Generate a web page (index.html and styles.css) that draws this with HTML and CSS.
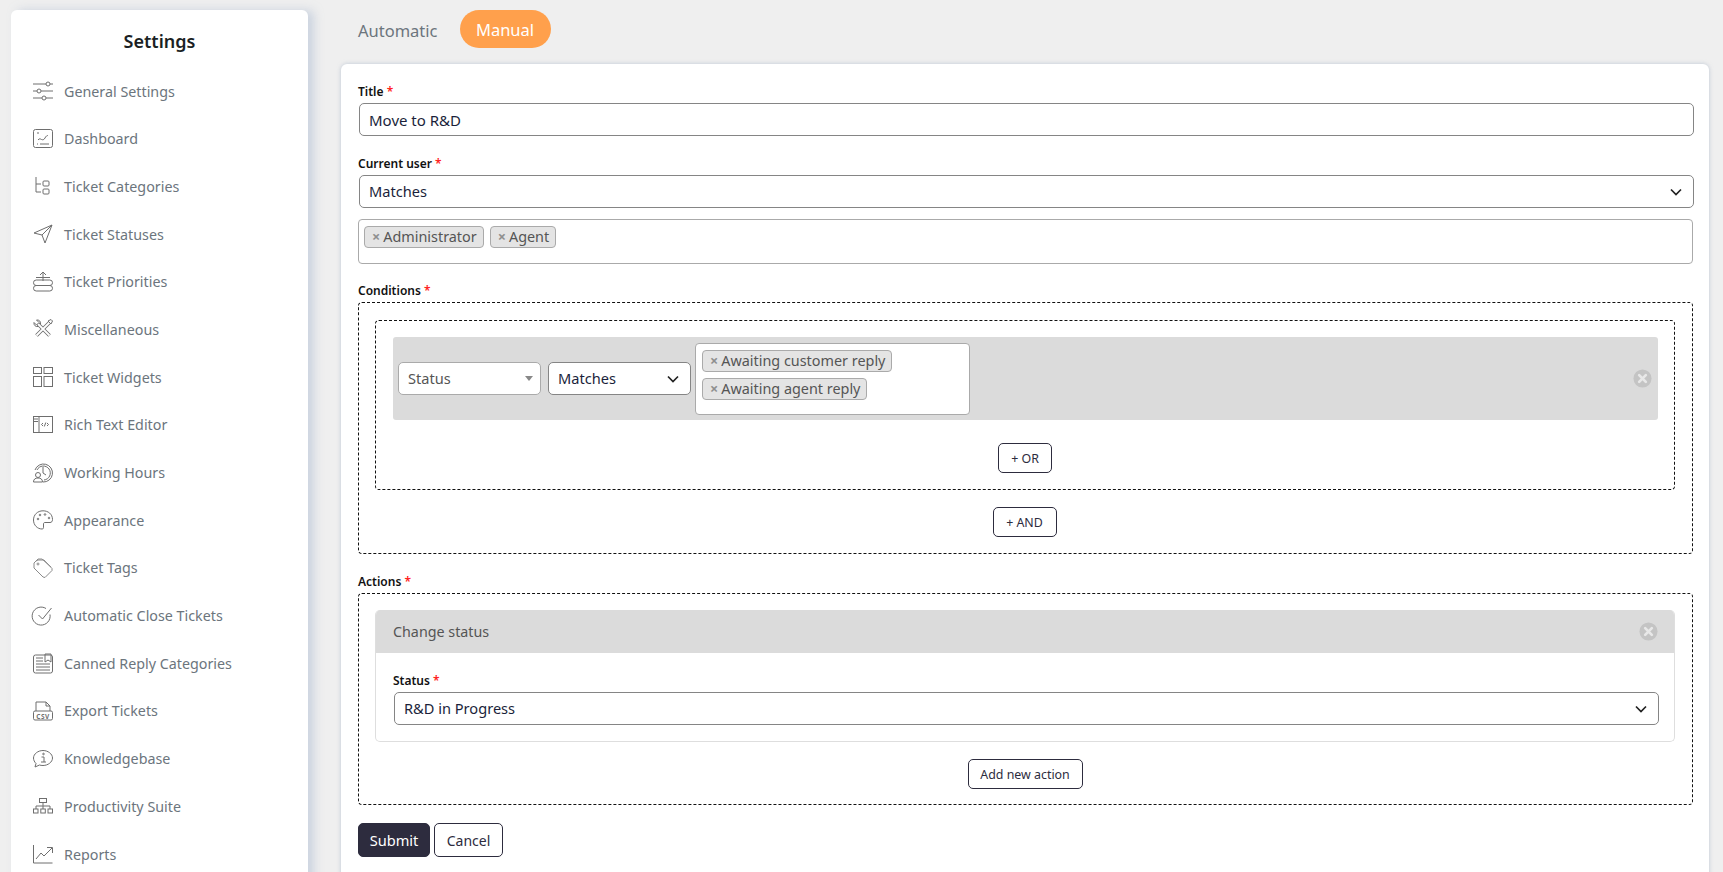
FILE: index.html
```html
<!DOCTYPE html>
<html lang="en">
<head>
<meta charset="utf-8">
<title>Settings</title>
<link rel="stylesheet" href="styles.css">
</head>
<body>
<div class="page">
  <aside class="sidebar">
    <h2 class="sidebar-title">Settings</h2>
    <nav class="nav">
      <a class="nav-item"><svg class="ico" viewBox="0 0 20 20"><path d="M0 3h13M17 3h3M0 10h4M8 10h12M0 17h9M13 17h7"/><circle cx="15" cy="3" r="2"/><circle cx="6" cy="10" r="2"/><circle cx="11" cy="17" r="2"/></svg>General Settings</a>
      <a class="nav-item"><svg class="ico" viewBox="0 0 20 20"><rect x=".5" y=".5" width="19" height="18" rx="2"/><path d="M5 11c1.500-2 2.500-1 3.500-.5S11 11 12 9s2-2.500 3-2.500M4 15h1M7 15h9M4 4h2"/></svg>Dashboard</a>
      <a class="nav-item"><svg class="ico" viewBox="0 0 20 20"><path d="M3 1v15h5M3 8h5"/><path d="M11 5h4a1 1 0 0 1 1 1v3a1 1 0 0 1-1 1h-4a1 1 0 0 1-1-1V6a1 1 0 0 1 1-1zM11 13h4a1 1 0 0 1 1 1v3a1 1 0 0 1-1 1h-4a1 1 0 0 1-1-1v-3a1 1 0 0 1 1-1z"/></svg>Ticket Categories</a>
      <a class="nav-item"><svg class="ico" viewBox="0 0 20 20"><path d="M19 1 1 9l8 2 3 8z"/><path d="M9 11 19 1"/></svg>Ticket Statuses</a>
      <a class="nav-item"><svg class="ico" viewBox="0 0 20 20"><path d="M10 9V0M7 3l3-3 3 3M3 5.500h14"/><rect x=".5" y="8" width="19" height="5.500" rx="2.700"/><rect x=".5" y="13.500" width="19" height="5.500" rx="2.700"/></svg>Ticket Priorities</a>
      <a class="nav-item"><svg class="ico" viewBox="0 0 20 20"><path class="tool-o" d="M5 5 16.500 16.500M16.500 3.500 3.500 16.500"/><path class="tool-i" d="M5 5 16.500 16.500M16.500 3.500 3.500 16.500"/><path d="M3.500 1 6 3.500 3.500 6 1 3.500C.5 6 2.500 8 5 7.500M3.500 1C6 .5 8 2.500 7.500 5"/><path d="m15 2 3-1.500 1.500 1.500L18 5z"/></svg>Miscellaneous</a>
      <a class="nav-item"><svg class="ico" viewBox="0 0 20 20"><rect x=".5" y=".5" width="8" height="6"/><rect x="11" y=".5" width="8.500" height="6"/><rect x=".5" y="9.500" width="8" height="10"/><rect x="11" y="9.500" width="8.500" height="10"/></svg>Ticket Widgets</a>
      <a class="nav-item"><svg class="ico" viewBox="0 0 20 20"><rect x=".5" y="1.500" width="19" height="16"/><path d="M6 1.500v16M1 4h4M1 6.500h4M10 8 8.500 9.500 10 11M14 8l1.500 1.500L14 11M12.800 7.500l-1.500 4"/></svg>Rich Text Editor</a>
      <a class="nav-item"><svg class="ico" viewBox="0 0 20 20"><path d="M2 7a9 9 0 1 1 8 12M4 7a7 7 0 1 1 7 10M10 4v6l3 2"/><circle cx="5" cy="12" r="2.500"/><path d="M.5 19c0-3 2-4 4.500-4s4.500 1 4.500 4z"/></svg>Working Hours</a>
      <a class="nav-item"><svg class="ico" viewBox="0 0 20 20"><path d="M10 .8C4.500.8.500 4.800.5 10s4 9 8.500 9c1.500 0 1.500-1 1.500-2v-3c0-1 .5-1.500 1.500-1.500h5c1.500 0 2.500-1 2.500-3C19.500 4 15 .8 10 .8z"/><circle cx="5" cy="9" r=".8"/><circle cx="7" cy="5" r=".8"/><circle cx="12" cy="4.500" r=".8"/><circle cx="16" cy="8" r=".8"/></svg>Appearance</a>
      <a class="nav-item"><svg class="ico ico-light" viewBox="0 0 20 20"><path d="M3 3 1 5v5l9 9 2 .5 7-7v-2L11 2H5z"/><path d="M3 3 5 1h4l9 8"/><circle cx="5" cy="6" r="1"/></svg>Ticket Tags</a>
      <a class="nav-item"><svg class="ico" viewBox="0 0 20 20"><path d="M17 8.500A9 9 0 1 1 13 2.500"/><path d="m5.500 9 4 4 9-11"/></svg>Automatic Close Tickets</a>
      <a class="nav-item"><svg class="ico" viewBox="0 0 20 20"><rect x=".5" y="2" width="19" height="18" rx="2"/><path d="M12 1h6v8l-3-2-3 2zM3 5h7M3 8h7M3 11h14M3 14h14M3 17h14"/></svg>Canned Reply Categories</a>
      <a class="nav-item"><svg class="ico" viewBox="0 0 20 20"><path d="M3 10V1h10l4 4v5M13 1v4h4"/><rect x=".5" y="10" width="19" height="9" rx="1.500"/><text class="ico-text" x="10" y="17.500" text-anchor="middle">CSV</text></svg>Export Tickets</a>
      <a class="nav-item"><svg class="ico" viewBox="0 0 20 20"><path d="M10 1.500c5 0 9.500 3.500 9.500 7.500S15 16.500 10 16.500c-1.500 0-2.500-.2-3.500-.5L2 18l1-3.500C1.500 13 .5 11 .5 9 .5 5 5 1.500 10 1.500z"/><path d="M8.500 8H11v5M8 13h5"/><circle cx="10.500" cy="5" r=".8"/></svg>Knowledgebase</a>
      <a class="nav-item"><svg class="ico" viewBox="0 0 20 20"><rect x="6.500" y="2.500" width="7" height="4"/><path d="M10 6.500v3M3 13v-3h14v3M10 9.500V13"/><rect x=".5" y="13" width="4.500" height="4"/><rect x="7.800" y="13" width="4.500" height="4"/><rect x="15" y="13" width="4.500" height="4"/></svg>Productivity Suite</a>
      <a class="nav-item"><svg class="ico" viewBox="0 0 20 20"><path d="M.5 1v18h19"/><path d="m3 15 5-6 3 3 8-8M14 3.500h5.500V9"/></svg>Reports</a>
    </nav>
  </aside>
  <main class="main">
    <div class="tabs">
      <span class="tab tab-plain">Automatic</span>
      <span class="tab tab-active">Manual</span>
    </div>
    <section class="card">
      <div class="field">
        <label class="label">Title <span class="req">*</span></label>
        <div class="control control-title">Move to R&amp;D</div>
      </div>
      <div class="field field-user">
        <label class="label">Current user <span class="req">*</span></label>
        <div class="control">Matches<svg class="chev" viewBox="0 0 12 8"><path d="m1 1.500 5 5 5-5"/></svg></div>
        <div class="multi multi-wide">
          <span class="tag"><b class="tag-x">×</b>Administrator</span>
          <span class="tag"><b class="tag-x">×</b>Agent</span>
        </div>
      </div>
      <div class="field">
        <label class="label">Conditions <span class="req">*</span></label>
        <div class="dashed dashed-conditions">
          <div class="dashed dashed-or">
            <div class="cond-row">
              <div class="mini mini-plain">Status<i class="caret"></i></div>
              <div class="mini">Matches<svg class="chev" viewBox="0 0 12 8"><path d="m1 1.500 5 5 5-5"/></svg></div>
              <div class="multi multi-cond">
                <span class="tag"><b class="tag-x">×</b>Awaiting customer reply</span>
                <span class="tag"><b class="tag-x">×</b>Awaiting agent reply</span>
              </div>
              <svg class="remove" viewBox="0 0 20 20"><circle cx="10" cy="10" r="9.500"/><path d="m6.500 6.500 7 7m0-7-7 7"/></svg>
            </div>
            <div class="center center-or"><button class="btn-outline btn-or">+ OR</button></div>
          </div>
          <div class="center center-and"><button class="btn-outline btn-and">+ AND</button></div>
        </div>
      </div>
      <div class="field">
        <label class="label">Actions <span class="req">*</span></label>
        <div class="dashed dashed-actions">
          <div class="panel">
            <div class="panel-head">Change status<svg class="remove" viewBox="0 0 20 20"><circle cx="10" cy="10" r="9.500"/><path d="m6.500 6.500 7 7m0-7-7 7"/></svg></div>
            <div class="panel-body">
              <label class="label">Status <span class="req">*</span></label>
              <div class="control">R&amp;D in Progress<svg class="chev" viewBox="0 0 12 8"><path d="m1 1.500 5 5 5-5"/></svg></div>
            </div>
          </div>
          <div class="center center-add"><button class="btn-outline btn-add">Add new action</button></div>
        </div>
      </div>
      <div class="actions">
        <button class="btn btn-submit">Submit</button>
        <button class="btn btn-cancel">Cancel</button>
      </div>
    </section>
  </main>
</div>
</body>
</html>
```
FILE: styles.css
```css
* { box-sizing: border-box; }
html, body { margin: 0; height: 872px; overflow: hidden; }
body { background: #efefef; font-family: "Noto Sans", "Open Sans", sans-serif; color: #212529; font-size: 14px; }
.page { display: flex; align-items: flex-start; height: 872px; padding: 10px 14px 0 11px; gap: 33px; }
.sidebar { width: 297px; flex: none; height: 900px; background: #fff; border-radius: 6px; box-shadow: 6px 0 10px rgba(170, 185, 210, .5); padding-top: 18px; }
.sidebar-title { margin: 0 0 13.2px; text-align: center; font-size: 18px; line-height: 26px; font-weight: 600; color: #1b1f24; }
.nav { display: flex; flex-direction: column; }
.nav-item { height: 47.7px; display: flex; align-items: center; gap: 11px; padding-left: 22px; color: #6c757d; font-size: 14.3px; }
.ico { width: 20px; height: 20px; flex: none; fill: none; stroke: #6e6e6e; stroke-width: 1; overflow: visible; }
.ico-light { stroke: #8a8a8a; }
.ico-text { font-size: 6.500px; font-weight: 700; fill: #6e6e6e; stroke: none; letter-spacing: .5px; }
.tool-o { stroke-width: 3.600; }
.tool-i { stroke: #fff; stroke-width: 1.800; }
.main { flex: 1; min-width: 0; }
.tabs { display: flex; align-items: center; height: 38px; margin-bottom: 16px; padding-left: 17px; gap: 22px; font-size: 16.5px; color: #6c757d; }
.tab-plain { padding-top: 2px; }
.tab-active { background: #ffa04c; color: #fff; height: 38px; line-height: 40px; width: 91px; text-align: center; border-radius: 19px; }
.card { background: #fff; border-radius: 6px; box-shadow: 0 0 4px rgba(150, 165, 190, .55); padding: 18px 15px 40px 17px; height: 830px; }
.field { margin-bottom: 18px; }
.field-user { margin-bottom: 17px; }
.label { display: block; font-size: 12px; line-height: 18px; padding-top: 1px; font-weight: 600; color: #111; margin-bottom: 2px; }
.req { color: #f22; }
.control { position: relative; height: 33px; line-height: 31px; margin-left: 1px; padding-left: 9px; font-size: 14.6px; color: #1b1f3b; background: #fff; border: 1px solid #858585; border-radius: 5px; }
.control-title { font-size: 15px; line-height: 33px; }
.chev { position: absolute; width: 12px; height: 8px; fill: none; stroke: #222; stroke-width: 1.700; right: 11px; top: 12px; }
.multi { background: #fff; border: 1px solid #aaa; border-radius: 4px; padding: 6px 5px 5px; display: flex; flex-wrap: wrap; align-content: flex-start; gap: 6px; }
.multi-wide { margin-top: 11px; height: 45px; margin-right: 1px; }
.tag { height: 22px; line-height: 20px; padding: 0 6px 0 7px; font-size: 14.4px; color: #555; background: #e4e4e4; border: 1px solid #aaa; border-radius: 4px; white-space: nowrap; }
.tag-x { color: #8f8f8f; font-weight: 700; margin-right: 3px; }
.dashed { border: 1px dashed #111; border-radius: 4px; }
.dashed-conditions { height: 252px; padding: 17px 17px 0 16px; margin-right: 1px; }
.dashed-or { height: 170px; padding: 16px 16px 0 17px; }
.cond-row { position: relative; height: 83px; display: flex; align-items: center; background: #dbdbdb; border-radius: 3px; padding-left: 5px; gap: 7px; }
.mini { position: relative; width: 143px; height: 33px; line-height: 31px; padding-left: 9px; background: #fff; border: 1px solid #858585; border-radius: 5px; color: #1b1f3b; font-size: 14.6px; }
.mini-plain { border-color: #aaa; color: #555; }
.caret { position: absolute; right: 7px; top: 13px; border: 4px solid transparent; border-top: 5px solid #888; border-bottom: 0; }
.multi-cond { width: 275px; height: 72px; margin-left: -3px; padding: 6px 6px 5px; }
.multi-cond .tag { flex: none; }
.remove { position: absolute; width: 19px; height: 19px; }
.remove circle { fill: #c4c4c4; }
.remove path { stroke: #e8e8e8; stroke-width: 2.800; stroke-linecap: round; fill: none; }
.cond-row .remove { right: 6px; top: 32px; }
.center { display: flex; justify-content: center; }
.center-or { margin-top: 23px; padding-right: 1px; }
.center-and { margin-top: 17px; padding-right: 1px; }
.btn-outline { height: 30px; background: #fff; border: 1px solid #2d2c3e; border-radius: 5px; font: 12.4px "Noto Sans", sans-serif; color: #2d2c3e; padding: 0; }
.btn-or { width: 54px; }
.btn-and { width: 64px; }
.btn-add { width: 115px; }
.dashed-actions { height: 212px; padding: 16px 17px 0 16px; margin-right: 1px; }
.panel { height: 132px; border: 1px solid #dedede; border-top: 0; border-radius: 5px; overflow: hidden; }
.panel-head { position: relative; height: 43px; line-height: 43px; margin: 0 -1px; background: #dbdbdb; padding-left: 18px; color: #555; font-size: 14.3px; }
.panel-head .remove { right: 17px; top: 12px; }
.panel-body { padding: 18px 15px 0 17px; }
.center-add { margin-top: 17px; }
.actions { display: flex; gap: 4px; }
.btn { height: 34px; border-radius: 5px; font: 14.6px "Noto Sans", sans-serif; padding: 0; }
.btn-submit { width: 72px; background: #2d2c3e; border: 1px solid #2d2c3e; color: #fff; }
.btn-cancel { width: 69px; background: #fff; border: 1px solid #2d2c3e; color: #2d2c3e; font-size: 14px; }
```
